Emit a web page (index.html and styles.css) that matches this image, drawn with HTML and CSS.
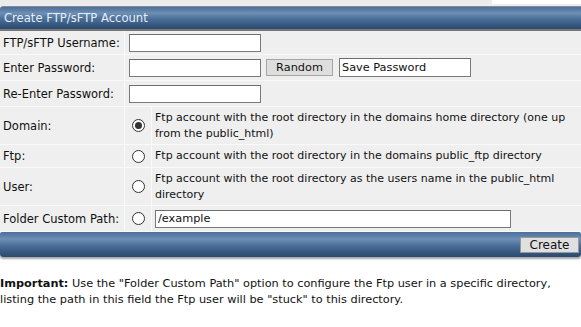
FILE: index.html
```html
<!DOCTYPE html>
<html>
<head>
<meta charset="utf-8">
<link rel="stylesheet" href="styles.css">
</head>
<body>
<div class="topstrip"><div class="ts-left"></div><div class="ts-right"></div></div>
<div class="bar head">Create FTP/sFTP Account</div>
<table class="form">
  <tr class="r1">
    <td class="lbl">FTP/sFTP Username:</td>
    <td colspan="2"><input class="txt" type="text"></td>
  </tr>
  <tr class="r2">
    <td class="lbl">Enter Password:</td>
    <td colspan="2"><div class="pwrow"><input class="txt" type="text"><button class="btn rand">Random</button><input class="txt save" type="text" value="Save Password"></div></td>
  </tr>
  <tr class="r3">
    <td class="lbl">Re-Enter Password:</td>
    <td colspan="2"><input class="txt" type="text"></td>
  </tr>
  <tr class="r4">
    <td class="lbl">Domain:</td>
    <td class="rad"><span class="radio on"></span></td>
    <td class="desc">Ftp account with the root directory in the domains home directory (one up from the public_html)</td>
  </tr>
  <tr class="r5">
    <td class="lbl">Ftp:</td>
    <td class="rad"><span class="radio"></span></td>
    <td class="desc">Ftp account with the root directory in the domains public_ftp directory</td>
  </tr>
  <tr class="r6">
    <td class="lbl">User:</td>
    <td class="rad"><span class="radio"></span></td>
    <td class="desc">Ftp account with the root directory as the users name in the public_html directory</td>
  </tr>
  <tr class="r7">
    <td class="lbl">Folder Custom Path:</td>
    <td class="rad"><span class="radio"></span></td>
    <td class="desc"><input class="txt path" type="text" value="/example"></td>
  </tr>
</table>
<div class="bar foot"><button class="btn create">Create</button></div>
<p class="note"><b>Important:</b> Use the "Folder Custom Path" option to configure the Ftp user in a specific directory, listing the path in this field the Ftp user will be "stuck" to this directory.</p>
</body>
</html>
```
FILE: styles.css
```css
html, body {
  margin: 0;
  padding: 0;
  background: #ffffff;
  font-family: "DejaVu Sans", Verdana, sans-serif;
  font-size: 11px;
  color: #111;
}
.topstrip {
  display: flex;
  height: 6px;
}
.ts-left {
  width: 492px;
  background: #ececec;
}
.ts-right {
  flex: 1;
  background: linear-gradient(#ffffff 0, #ffffff 4px, #ececec 4px);
}
.bar {
  background: linear-gradient(#4b709c 0%, #5b7fa8 15%, #6f90b5 28%, #4f739d 50%, #3a5d85 75%, #2b496d 100%);
}
.head {
  height: 22px;
  border-top: 1px solid #8c8c8c;
  border-bottom: 2px solid #777;
  border-top-left-radius: 3px;
  color: #e8eef5;
  font-size: 11.6px;
  line-height: 22px;
  padding-left: 4px;
}
.form {
  width: 100%;
  border-collapse: collapse;
  background: #f8f8f8;
}
.form td {
  background: #efefef;
  padding: 0 3px;
  border: 1px solid #f9f9f9;
  border-top: 0;
  vertical-align: middle;
}
.form td:first-child { border-left: 0; }
.form td:last-child { border-right: 0; }
.lbl {
  width: 118px;
  font-size: 11.5px;
}
.r1 td { height: 23px; }
.r2 td { height: 25px; }
.r3 td { height: 25px; }
.r4 td { height: 37px; }
.r5 td { height: 22px; }
.r6 td { height: 37px; }
.r7 td { height: 25px; }
.rad {
  width: 20px;
  text-align: center;
}
.form td.desc {
  line-height: 16px;
  padding-left: 3px;
  padding-right: 0;
}
.txt {
  box-sizing: border-box;
  height: 18px;
  width: 132px;
  margin: 0 0 0 1px;
  padding: 0 2px;
  border: 1px solid #7a7a7a;
  border-top-color: #6e6e6e;
  background: #fff;
  font-family: "DejaVu Sans", Verdana, sans-serif;
  font-size: 11.3px;
  color: #111;
  vertical-align: middle;
}
.pwrow {
  display: flex;
  align-items: center;
}
.btn {
  box-sizing: border-box;
  height: 17px;
  padding: 0;
  border: 1px solid #a5a5a5;
  background: #dedede;
  font-family: "DejaVu Sans", Verdana, sans-serif;
  font-size: 11.3px;
  color: #111;
  line-height: 15px;
}
.rand {
  width: 67px;
  margin-left: 5px;
}
.save {
  width: 132px;
  margin-left: 6px;
  height: 19px;
}
.path {
  width: 356px;
  margin-left: 0;
}
.radio {
  display: inline-block;
  box-sizing: border-box;
  width: 13px;
  height: 13px;
  border: 1px solid #333;
  border-radius: 50%;
  background: #fff;
  vertical-align: middle;
  position: relative;
}
.radio.on::after {
  content: "";
  position: absolute;
  left: 2px;
  top: 2px;
  width: 7px;
  height: 7px;
  border-radius: 50%;
  background: #333;
}
.foot {
  height: 25px;
  display: flex;
  justify-content: flex-end;
  align-items: center;
  border-radius: 2px 2px 3px 3px;
  box-shadow: 0 2px 2px rgba(0,0,0,0.35);
}
.create {
  width: 59px;
  height: 16px;
  margin-right: 2px;
  margin-top: 1px;
  background: #e0e0e0;
  border-color: #999;
  font-size: 12px;
}
.note {
  margin: 19px 0 0 0;
  line-height: 16px;
  font-size: 11.3px;
  color: #111;
}
.note b {
  font-weight: bold;
}
```
